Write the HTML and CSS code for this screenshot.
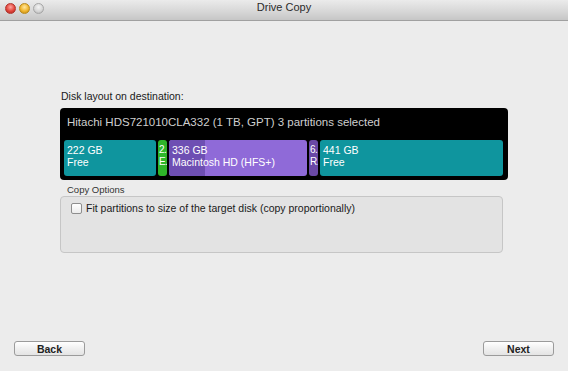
FILE: index.html
```html
<!DOCTYPE html>
<html lang="en">
<head>
    <meta charset="UTF-8">
    <title>Drive Copy</title>
    <link rel="stylesheet" href="styles.css">
</head>
<body>
    <div class="window">
        <div class="titlebar">
            <div class="lights">
                <span class="light red"></span>
                <span class="light yellow"></span>
                <span class="light gray"></span>
            </div>
            <div class="title">Drive Copy</div>
        </div>

        <div class="content">
            <div class="section-label">Disk layout on destination:</div>
            <div class="disk">
                <div class="disk-name">Hitachi HDS721010CLA332 (1 TB, GPT) 3 partitions selected</div>
                <div class="partitions">
                    <div class="part teal p1"><span>222 GB</span><span>Free</span></div>
                    <div class="part green p2 narrow"><span>2.</span><span>E.</span></div>
                    <div class="part purple p3">
                        <div class="used"></div>
                        <div class="label"><span>336 GB</span><span>Macintosh HD (HFS+)</span></div>
                    </div>
                    <div class="part violet p4 narrow"><span>6.</span><span>R.</span></div>
                    <div class="part teal p5"><span>441 GB</span><span>Free</span></div>
                </div>
            </div>

            <div class="group-label">Copy Options</div>
            <div class="group">
                <label class="option">
                    <span class="checkbox"></span>
                    Fit partitions to size of the target disk (copy proportionally)
                </label>
            </div>
        </div>

        <div class="footer">
            <button class="btn">Back</button>
            <button class="btn">Next</button>
        </div>
    </div>
</body>
</html>
```

FILE: styles.css
```css
html, body {
    margin: 0;
    padding: 0;
}

body {
    width: 568px;
    height: 371px;
    overflow: hidden;
    background: #ececec;
    font-family: "Liberation Sans", Arial, sans-serif;
    font-size: 10.5px;
    color: #1a1a1a;
}

.window {
    height: 371px;
    display: flex;
    flex-direction: column;
}

.titlebar {
    height: 21px;
    box-sizing: border-box;
    background: linear-gradient(#ebebeb, #d6d6d6 60%, #c6c6c6);
    border-bottom: 1px solid #a0a0a0;
    display: flex;
    align-items: center;
    position: relative;
}

.lights {
    display: flex;
    gap: 3px;
    padding-left: 5px;
    margin-top: -4px;
}

.light {
    width: 11px;
    height: 11px;
    border-radius: 50%;
    box-sizing: border-box;
}

.red {
    background: radial-gradient(circle at 50% 35%, #ffa6a0, #e2453c 55%, #a8231c);
    border: 1px solid #b0352e;
}

.yellow {
    background: radial-gradient(circle at 50% 35%, #ffe8a0, #f0b52d 55%, #b98413);
    border: 1px solid #b98a1d;
}

.gray {
    background: radial-gradient(circle at 50% 35%, #f4f4f4, #d4d4d4 60%, #a9a9a9);
    border: 1px solid #a6a6a6;
}

.title {
    position: absolute;
    left: 0;
    right: 0;
    top: 1px;
    text-align: center;
    font-size: 11px;
    color: #2b2b2b;
}

.content {
    flex: 1;
    padding: 69px 60px 0 60px;
}

.section-label {
    padding-left: 1px;
    margin-bottom: 5px;
    line-height: 13px;
}

.disk {
    width: 448px;
    height: 72px;
    box-sizing: border-box;
    background: #000;
    border-radius: 4px;
    padding: 0 5px 0 4px;
}

.disk-name {
    color: #cfcfcf;
    font-size: 11.5px;
    height: 32px;
    line-height: 29px;
    padding-left: 3px;
}

.partitions {
    display: flex;
    gap: 2px;
    height: 36px;
}

.part {
    border-radius: 3px;
    color: #fff;
    font-size: 10.5px;
    line-height: 12px;
    display: flex;
    flex-direction: column;
    padding: 4px 0 0 3px;
    box-sizing: border-box;
    overflow: hidden;
    white-space: nowrap;
}

.narrow {
    padding-left: 1px;
    font-size: 10px;
    letter-spacing: -0.5px;
}

.teal {
    background: #0f959e;
}

.green {
    background: #2fb52a;
}

.purple {
    background: #8f6ad8;
    position: relative;
    padding: 0;
}

.violet {
    background: #6a48a6;
}

.p1 { width: 92px; }
.p2 { width: 9px; }
.p3 { width: 138px; }
.p4 { width: 9px; }
.p5 { width: 183px; }

.used {
    position: absolute;
    left: 0;
    top: 0;
    bottom: 0;
    width: 36px;
    background: #6e4fb3;
}

.label {
    position: relative;
    display: flex;
    flex-direction: column;
    padding: 4px 0 0 3px;
}

.group-label {
    font-size: 9.5px;
    color: #333;
    padding-left: 7px;
    margin-top: 4px;
    line-height: 12px;
}

.group {
    width: 443px;
    height: 57px;
    box-sizing: border-box;
    background: #e3e3e3;
    border: 1px solid #c6c6c6;
    border-radius: 4px;
    padding: 5px 10px;
}

.option {
    display: flex;
    align-items: center;
    gap: 4px;
    line-height: 13px;
}

.checkbox {
    width: 11px;
    height: 11px;
    box-sizing: border-box;
    border: 1px solid #8e8e8e;
    border-radius: 2px;
    background: linear-gradient(#ffffff, #ececec);
}

.footer {
    display: flex;
    justify-content: space-between;
    padding: 0 14px 15px 14px;
}

.btn {
    width: 71px;
    height: 15px;
    padding: 0;
    font-family: "Liberation Sans", Arial, sans-serif;
    font-size: 10.5px;
    font-weight: bold;
    color: #222;
    background: linear-gradient(#ffffff, #f0f0f0 50%, #e4e4e4);
    border: 1px solid #9b9b9b;
    border-radius: 3px;
}
```
